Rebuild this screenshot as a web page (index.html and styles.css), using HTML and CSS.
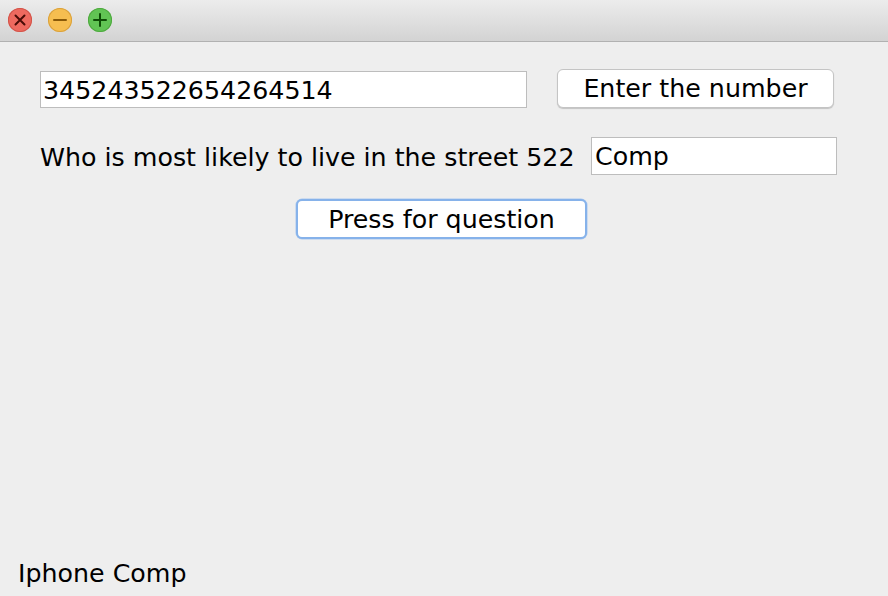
FILE: index.html
```html
<!DOCTYPE html>
<html>
<head>
<meta charset="utf-8">
<link rel="stylesheet" href="styles.css">
</head>
<body>
<div class="window">
  <div class="titlebar">
    <span class="light red"><svg viewBox="0 0 24 24" width="24" height="24"><path d="M7.5 7.5 L16.5 16.5 M16.5 7.5 L7.5 16.5" stroke="#4a0c06" stroke-width="2" stroke-linecap="round"/></svg></span>
    <span class="light yellow"><svg viewBox="0 0 24 24" width="24" height="24"><path d="M6 12 H18" stroke="#8a5a08" stroke-width="2" stroke-linecap="round"/></svg></span>
    <span class="light green"><svg viewBox="0 0 24 24" width="24" height="24"><path d="M6 12 H18 M12 6 V18" stroke="#0d4d05" stroke-width="2" stroke-linecap="round"/></svg></span>
  </div>
  <div class="content">
    <div class="row row1">
      <div class="field field-number">345243522654264514</div>
      <div class="btn btn-enter">Enter the number</div>
    </div>
    <div class="row row2">
      <div class="label">Who is most likely to live in the street 522</div>
      <div class="field field-answer">Comp</div>
    </div>
    <div class="row row3">
      <div class="btn btn-question">Press for question</div>
    </div>
    <div class="footer">Iphone Comp</div>
  </div>
</div>
</body>
</html>
```
FILE: styles.css
```css
* { box-sizing: border-box; }
html, body {
  margin: 0;
  padding: 0;
  width: 888px;
  height: 596px;
  overflow: hidden;
  background: #eeeeee;
  font-family: "DejaVu Sans", "Lucida Grande", sans-serif;
  font-size: 25.3px;
  color: #000;
}
.window {
  width: 888px;
  height: 596px;
  display: flex;
  flex-direction: column;
}
.titlebar {
  height: 42px;
  flex: none;
  background: linear-gradient(#ececec, #d3d3d3);
  border-bottom: 1px solid #b1b1b1;
  display: flex;
  align-items: center;
  gap: 16px;
  padding-left: 8px;
  padding-bottom: 1px;
}
.light {
  width: 24px;
  height: 24px;
  border-radius: 50%;
  display: block;
  position: relative;
}
.light svg { display: block; }
.red { background: #ee6a5f; box-shadow: inset 0 0 0 1px #d1544a; }
.yellow { background: #f6be50; box-shadow: inset 0 0 0 1px #d9a13d; }
.green { background: #61c454; box-shadow: inset 0 0 0 1px #4fa83f; }
.content {
  flex: 1;
  display: flex;
  flex-direction: column;
  padding-top: 27px;
}
.row {
  display: flex;
  align-items: center;
}
.row1 {
  padding-left: 40px;
  height: 39px;
  gap: 30px;
}
.field {
  background: #fff;
  border: 1px solid #bdbdbd;
  height: 38px;
  line-height: 38px;
  padding-left: 2px;
  white-space: nowrap;
  overflow: hidden;
}
.field-number {
  width: 487px;
  height: 37px;
  line-height: 37px;
  align-self: flex-end;
}
.btn {
  background: #fff;
  border: 1px solid #c4c4c4;
  border-radius: 6px;
  box-shadow: 0 1px 1px rgba(0,0,0,0.18);
  text-align: center;
  white-space: nowrap;
}
.btn-enter {
  width: 277px;
  height: 39px;
  line-height: 38px;
}
.row2 {
  margin-top: 29px;
  padding-left: 40px;
  height: 38px;
}
.label {
  width: 551px;
  white-space: nowrap;
  padding-top: 3px;
}
.field-answer {
  width: 246px;
  padding-left: 3px;
}
.row3 {
  margin-top: 24px;
  padding-left: 296px;
}
.btn-question {
  width: 291px;
  height: 40px;
  line-height: 37px;
  border: 2px solid #86b2ea;
  box-shadow: 0 0 0 0.5px #a9c8f0;
}
.footer {
  margin-top: auto;
  padding-left: 18px;
  padding-bottom: 7px;
  line-height: 30px;
}
```
